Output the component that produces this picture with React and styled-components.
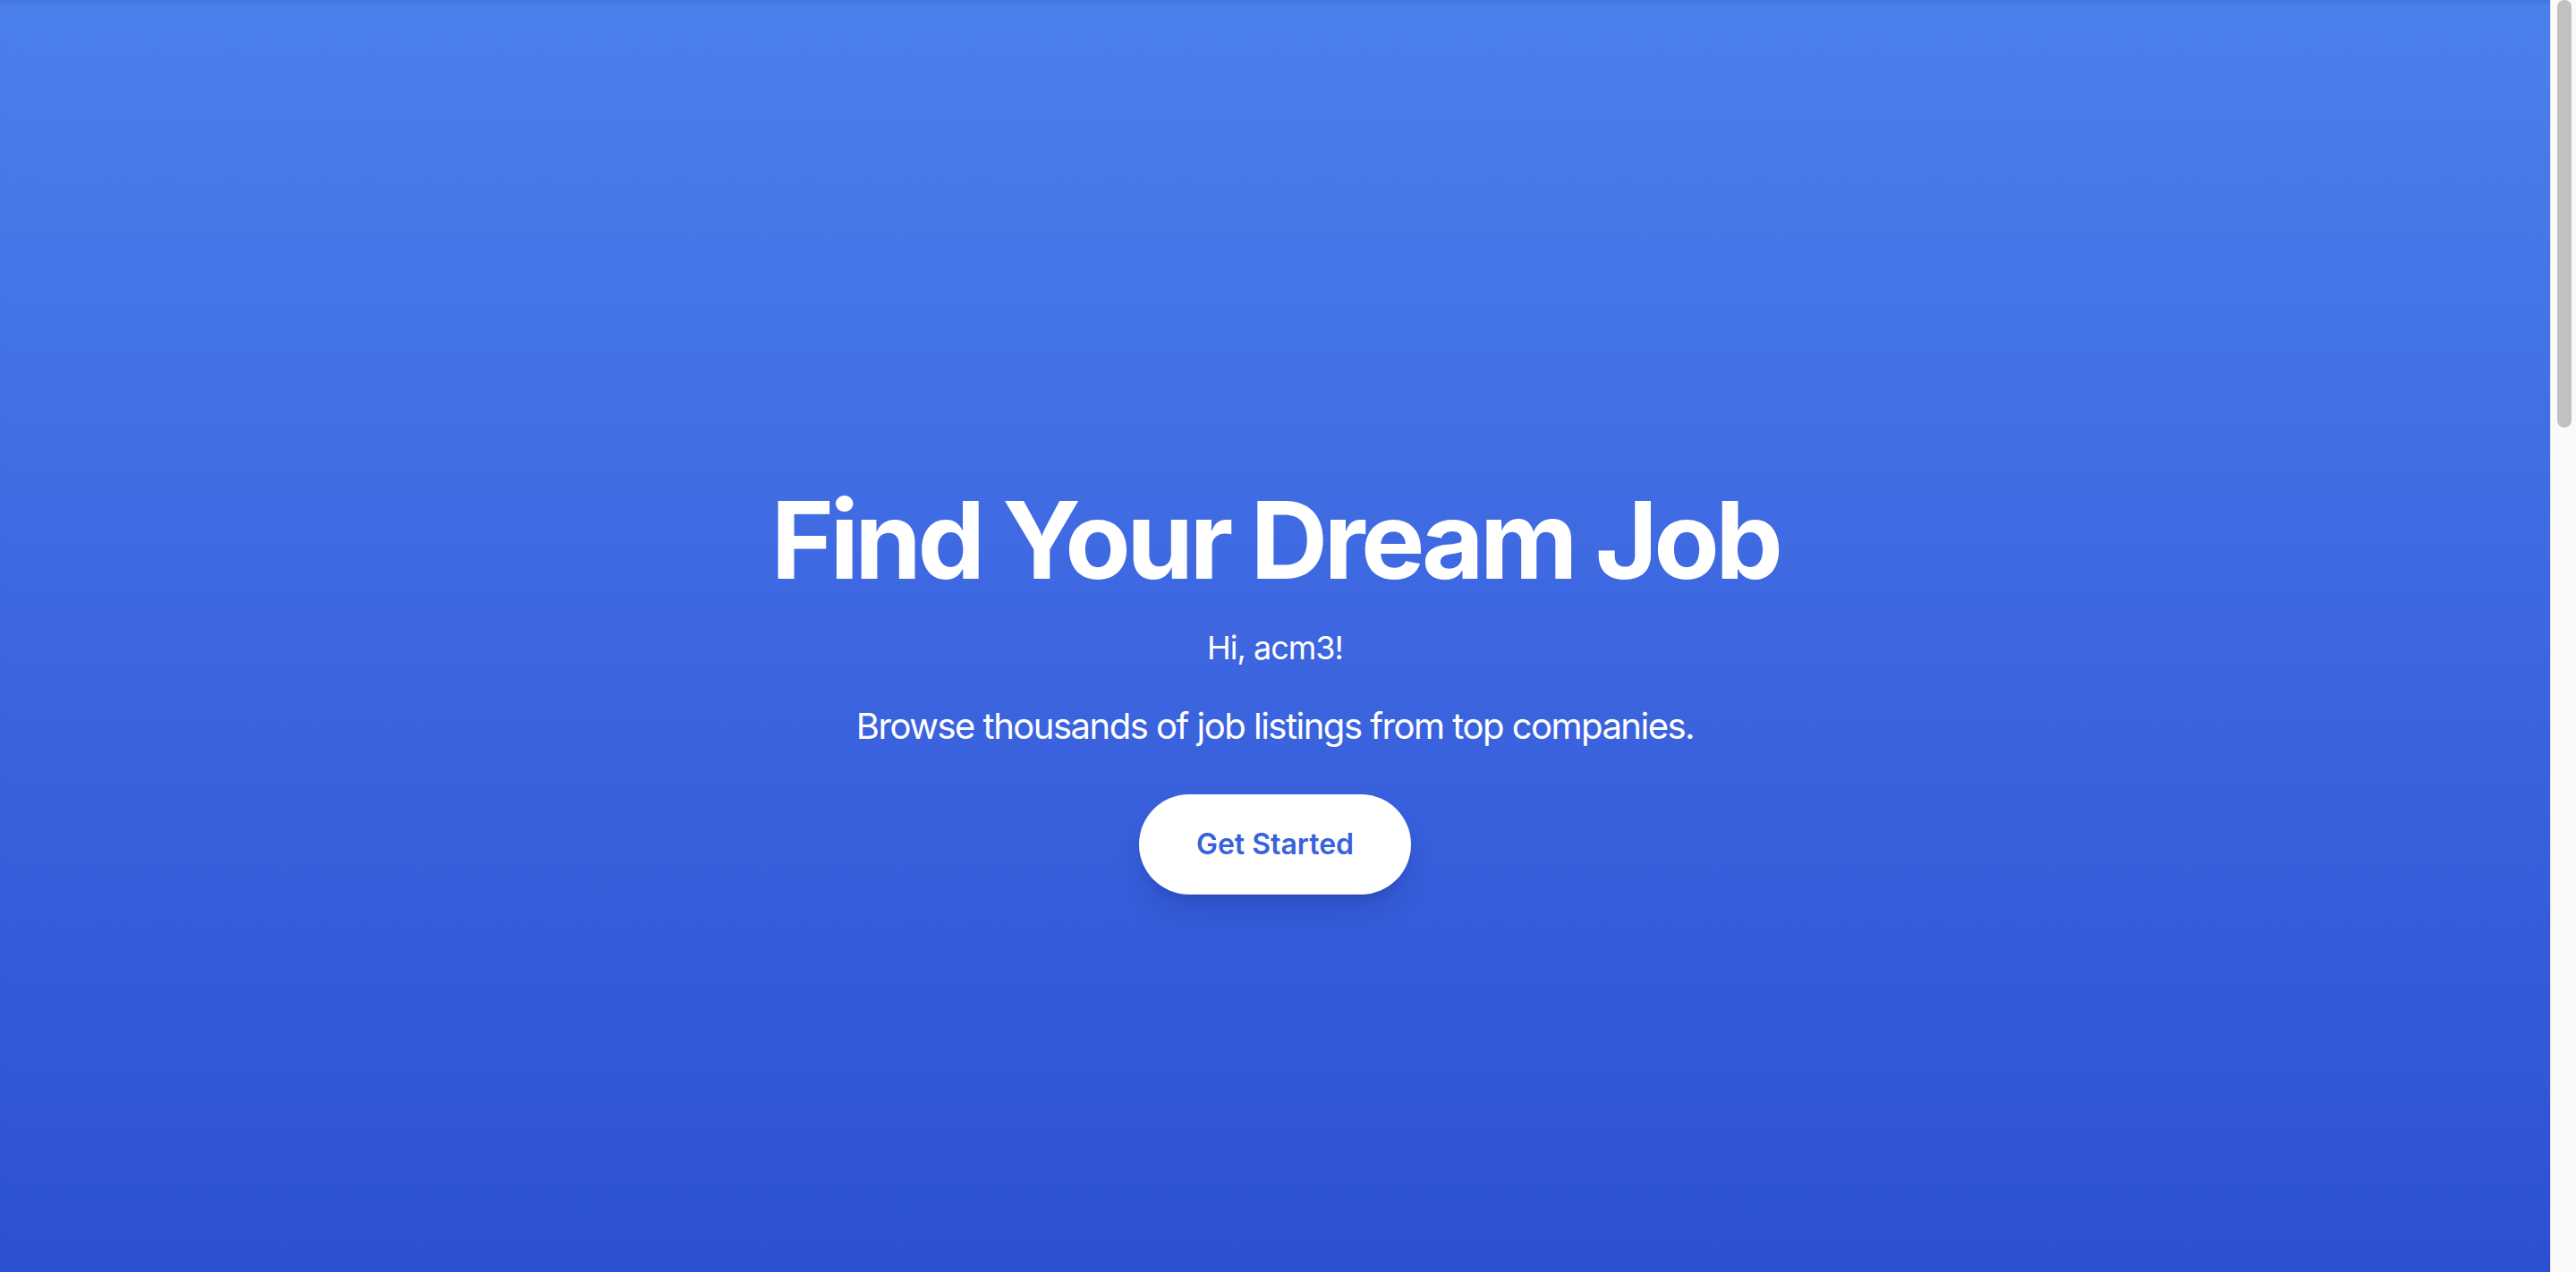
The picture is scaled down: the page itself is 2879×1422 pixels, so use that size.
import React from "react";
import styled, { createGlobalStyle } from "styled-components";

const GlobalStyle = createGlobalStyle`
  html, body {
    margin: 0;
    padding: 0;
  }
  body {
    font-family: Inter, "Noto Sans", "Liberation Sans", sans-serif;
    background: #ffffff;
    overflow: hidden;
  }
`;

// Window: page content plus the browser's scroll rail
const Viewport = styled.div`
  display: flex;
  height: 100vh;
`;

const Page = styled.main`
  flex: 1;
  min-width: 0;
  overflow: hidden;
`;

const ScrollRail = styled.div`
  box-sizing: border-box;
  flex: 0 0 29px;
  padding: 0 5px 0 7px;
  background: #fafafa;
  border-left: 1px solid #e2e2e2;
`;

const ScrollThumb = styled.div`
  width: 16px;
  height: 478px;
  border-radius: 8px;
  background: #c1c1c1;
`;

// Full-screen hero with the blue gradient
const Hero = styled.section`
  box-sizing: border-box;
  height: 100vh;
  padding-top: 122px;
  display: flex;
  flex-direction: column;
  align-items: center;
  justify-content: center;
  text-align: center;
  color: #ffffff;
  background: linear-gradient(180deg, #4b81ec 0%, #3d66e0 50%, #2d50d3 100%);
  box-shadow: inset 0 7px 7px -5px rgba(20, 40, 110, 0.18);
`;

const Title = styled.h1`
  margin: 0 0 32px;
  font-size: 120px;
  line-height: 1;
  font-weight: 700;
  letter-spacing: -4.6px;
`;

const Greeting = styled.p`
  margin: 0 0 32px;
  font-size: 36px;
  line-height: 56px;
  font-weight: 400;
  letter-spacing: -1px;
`;

const Lead = styled.p`
  margin: 0 0 48px;
  font-size: 40px;
  line-height: 56px;
  font-weight: 400;
  letter-spacing: -1.5px;
`;

const CtaButton = styled.button`
  font-family: inherit;
  border: none;
  cursor: pointer;
  padding: 32px 64px;
  border-radius: 9999px;
  background: #ffffff;
  color: #3862dc;
  font-size: 32px;
  line-height: 48px;
  font-weight: 600;
  box-shadow: 0 20px 30px -6px rgba(20, 40, 120, 0.25),
    0 8px 12px -8px rgba(20, 40, 120, 0.2);
`;

export default function App() {
  return (
    <>
      <GlobalStyle />
      <Viewport>
        <Page>
          <Hero>
            <Title>Find Your Dream Job</Title>
            <Greeting>Hi, acm3!</Greeting>
            <Lead>Browse thousands of job listings from top companies.</Lead>
            <CtaButton>Get Started</CtaButton>
          </Hero>
        </Page>
        <ScrollRail>
          <ScrollThumb />
        </ScrollRail>
      </Viewport>
    </>
  );
}
